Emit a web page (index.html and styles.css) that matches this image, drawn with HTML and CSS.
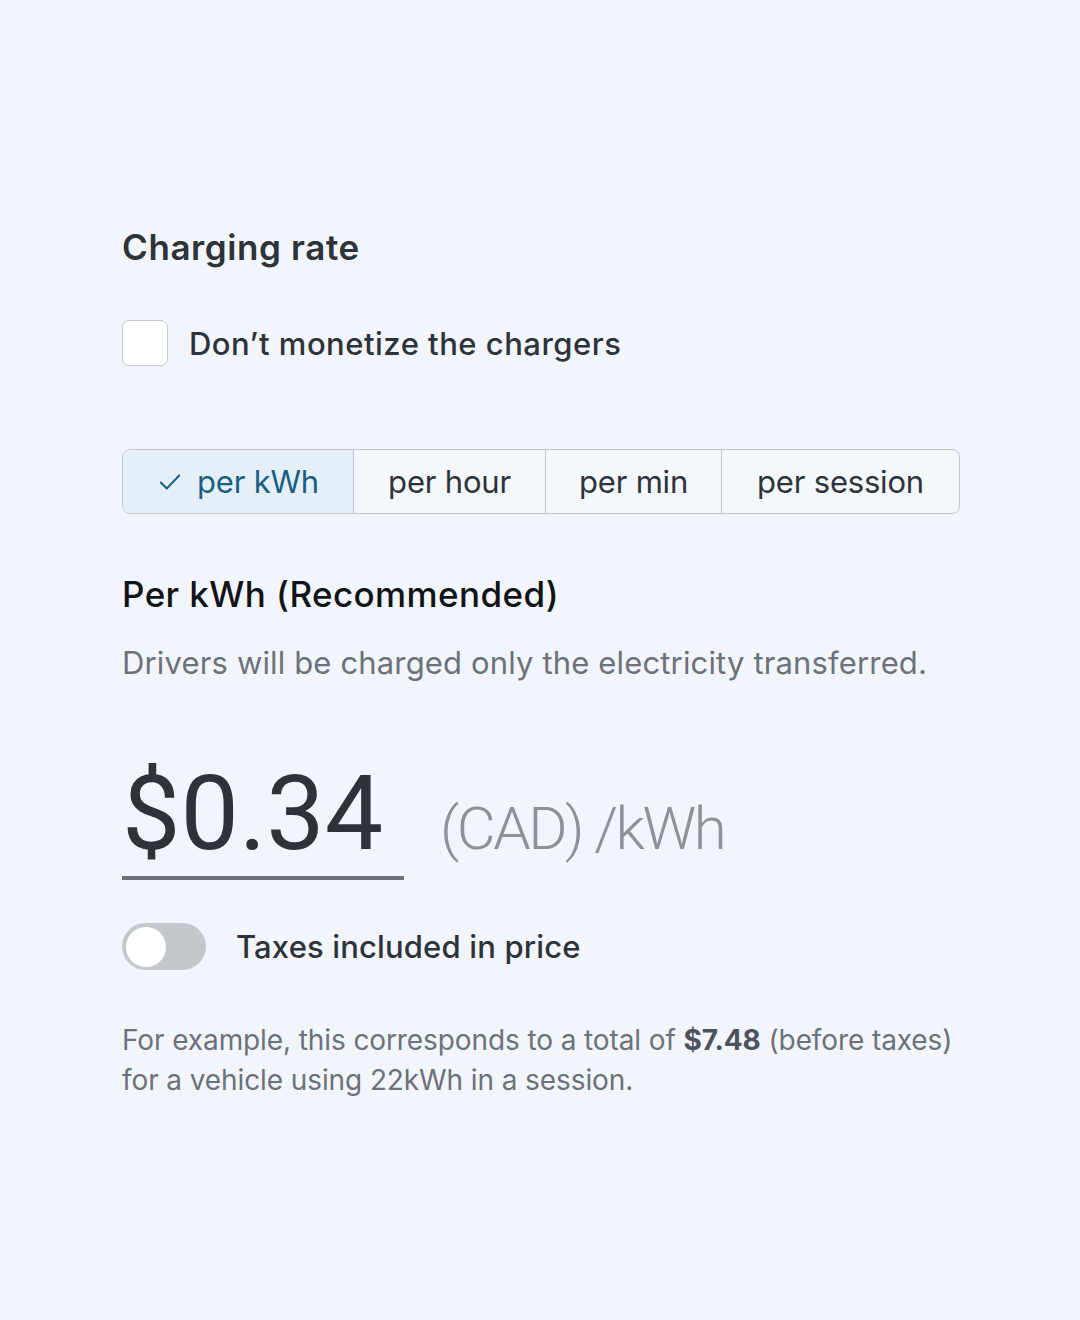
FILE: index.html
```html
<!DOCTYPE html>
<html lang="en">
<head>
<meta charset="utf-8">
<link rel="stylesheet" href="styles.css">
</head>
<body>
<main class="panel">
  <h1 class="title">Charging rate</h1>
  <label class="check-row">
    <span class="checkbox"></span>
    <span class="check-label">Don’t monetize the chargers</span>
  </label>
  <div class="segments">
    <div class="seg seg-active"><svg class="tick" viewBox="0 0 24 24" width="26" height="26"><path d="M3.5 12.5l5.5 5.5L20.5 6" fill="none" stroke="currentColor" stroke-width="1.8" stroke-linecap="round" stroke-linejoin="round"/></svg><span>per kWh</span></div>
    <div class="seg seg-hour">per hour</div>
    <div class="seg seg-min">per min</div>
    <div class="seg seg-session">per session</div>
  </div>
  <h2 class="subtitle">Per kWh (Recommended)</h2>
  <p class="desc">Drivers will be charged only the electricity transferred.</p>
  <div class="price-row">
    <div class="price">$0.34</div>
    <div class="unit">(CAD) /kWh</div>
  </div>
  <div class="toggle-row">
    <span class="toggle"><span class="knob"></span></span>
    <span class="toggle-label">Taxes included in price</span>
  </div>
  <p class="note">For example, this corresponds to a total of <strong>$7.48</strong> (before taxes) for a vehicle using 22kWh in a session.</p>
</main>
</body>
</html>
```
FILE: styles.css
```css
html, body {
  margin: 0;
  padding: 0;
  background: #f2f6fc;
}
body {
  font-family: Inter, "Noto Sans", sans-serif;
  color: #2e333a;
  width: 1080px;
  height: 1320px;
  overflow: hidden;
}
.panel {
  padding: 224px 0 0 122px;
  width: 838px;
  display: flex;
  flex-direction: column;
}
.title {
  margin: 0;
  font-size: 35px;
  line-height: 46px;
  font-weight: 600;
  letter-spacing: 0.6px;
  color: #2e333a;
}
.check-row {
  margin-top: 50px;
  display: flex;
  align-items: center;
  gap: 21px;
}
.checkbox {
  width: 44px;
  height: 44px;
  border: 1.5px solid #c6c9ce;
  border-radius: 7px;
  background: #ffffff;
}
.check-label {
  font-size: 31px;
  font-weight: 500;
  letter-spacing: 0.5px;
}
.segments {
  margin-top: 83px;
  display: flex;
  height: 63px;
  border: 1.5px solid #c2c6cc;
  border-radius: 8px;
  overflow: hidden;
  background: #f4f7fc;
}
.seg {
  display: flex;
  align-items: center;
  justify-content: center;
  gap: 14px;
  font-size: 31px;
  letter-spacing: -0.2px;
  color: #2e333a;
  border-left: 1.5px solid #c2c6cc;
}
.seg-active {
  width: 230px;
  border-left: none;
  background: #e5eff8;
  color: #1a5f82;
}
.tick { color: #1a5f82; }
.seg-hour { width: 191px; }
.seg-min { width: 175px; }
.seg-session { flex: 1; }
.subtitle {
  margin: 58px 0 0;
  font-size: 35px;
  line-height: 44px;
  font-weight: 500;
  letter-spacing: 0.4px;
  color: #111317;
}
.desc {
  margin: 27px 0 0;
  font-size: 31px;
  line-height: 40px;
  letter-spacing: 0.15px;
  color: #6c717a;
}
.price-row {
  margin-top: 75px;
  display: flex;
  align-items: baseline;
  gap: 36px;
}
.price {
  font-family: Roboto, "DejaVu Sans Condensed", sans-serif;
  font-size: 104px;
  line-height: 112px;
  color: #2e333a;
  width: 282px;
  border-bottom: 4px solid #6c717a;
  padding-bottom: 6px;
  letter-spacing: 0;
}
.unit {
  font-family: Roboto, sans-serif;
  font-size: 60px;
  font-weight: 300;
  letter-spacing: -2.5px;
  color: #8d9299;
}
.toggle-row {
  margin-top: 43px;
  display: flex;
  align-items: center;
  gap: 30px;
}
.toggle {
  width: 84px;
  height: 47px;
  border-radius: 24px;
  background: #c4c7cc;
  display: flex;
  align-items: center;
  padding-left: 4px;
  box-sizing: border-box;
}
.knob {
  width: 40px;
  height: 40px;
  border-radius: 50%;
  background: #ffffff;
}
.toggle-label {
  font-size: 31px;
  font-weight: 500;
  letter-spacing: 0.15px;
}
.note {
  margin: 50px 0 0;
  font-size: 28px;
  line-height: 40px;
  letter-spacing: -0.1px;
  color: #6c717a;
}
.note strong {
  font-weight: 700;
  color: #4e535b;
}
```
